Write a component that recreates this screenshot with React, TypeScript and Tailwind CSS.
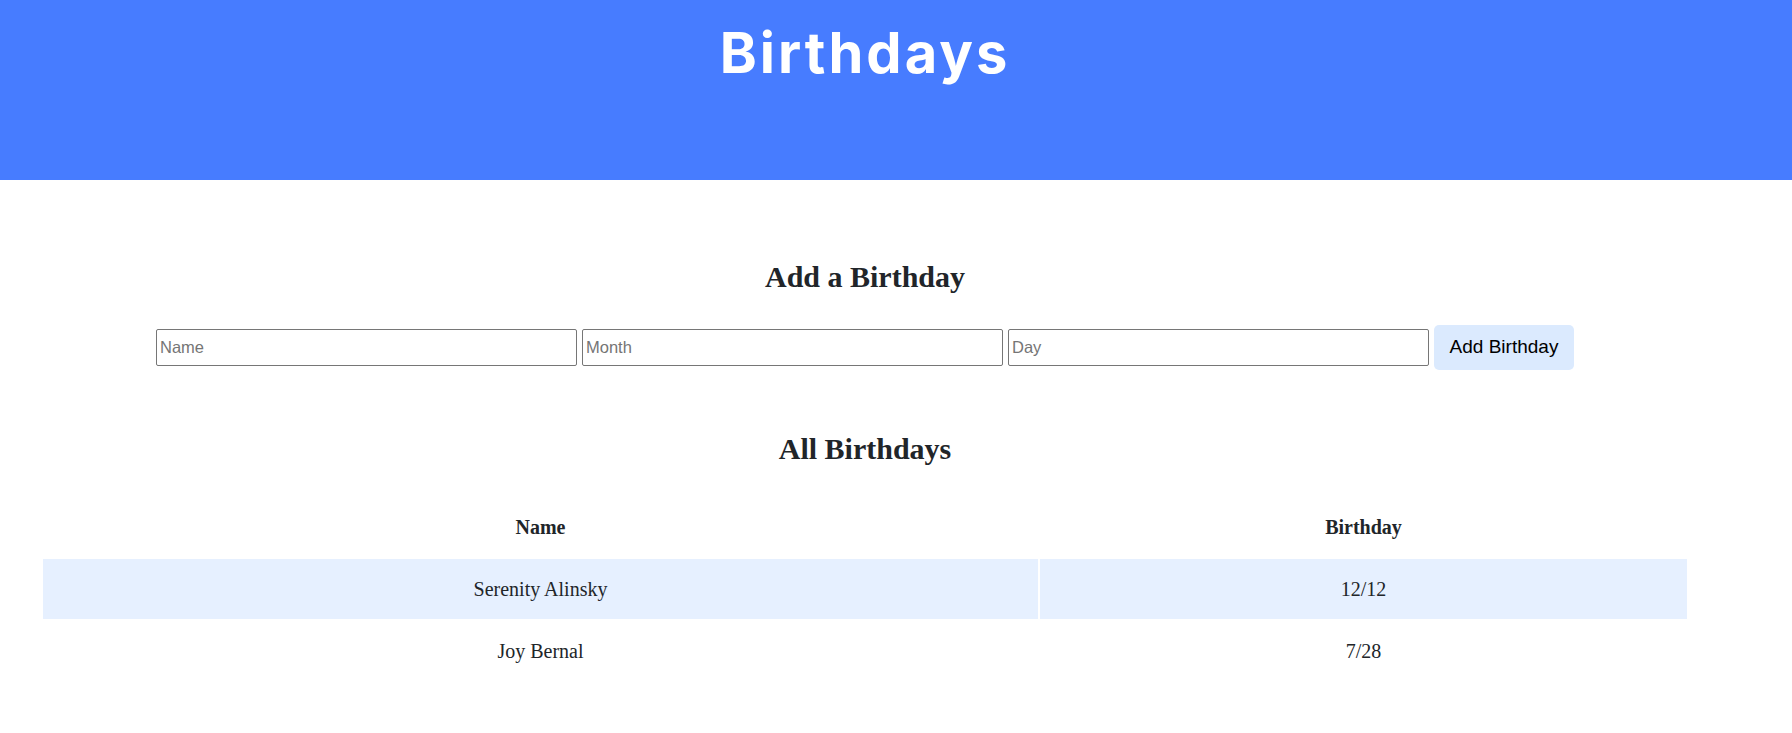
import React from "react";

const rows = [
  { name: "Serenity Alinsky", date: "12/12", shaded: true },
  { name: "Joy Bernal", date: "7/28", shaded: false },
];

export default function App() {
  return (
    <div className="min-h-[733px] w-full bg-white">
      <header className="h-[180px] w-full bg-[#477cff]">
        <div className="w-[1730px] pt-[25px] text-center">
          <h1 className="text-[56px] leading-[56px] font-bold tracking-[3px] text-white [font-family:Inter,'Open_Sans',sans-serif]">
            Birthdays
          </h1>
        </div>
      </header>
      <main className="flex w-[1730px] flex-col items-center text-[#212529] [font-family:'Liberation_Serif','Times_New_Roman',serif]">
        <h2 className="mt-[82px] text-[30px] leading-[30px] font-bold">Add a Birthday</h2>
        <form className="mt-[33px] flex items-center gap-[5px] [font-family:'Liberation_Sans',Arial,sans-serif]">
          <input
            placeholder="Name"
            className="h-[37px] w-[421px] rounded-[2px] border border-[#767676] px-[3px] text-[16.5px] text-black placeholder:text-[#757575]"
          />
          <input
            placeholder="Month"
            className="h-[37px] w-[421px] rounded-[2px] border border-[#767676] px-[3px] text-[16.5px] text-black placeholder:text-[#757575]"
          />
          <input
            placeholder="Day"
            className="h-[37px] w-[421px] rounded-[2px] border border-[#767676] px-[3px] text-[16.5px] text-black placeholder:text-[#757575]"
          />
          <button
            type="button"
            className="h-[45px] w-[140px] rounded-[5px] bg-[#dbeafe] text-[19px] text-black"
          >
            Add Birthday
          </button>
        </form>
        <h2 className="mt-[64px] text-[30px] leading-[30px] font-bold">All Birthdays</h2>
        <table className="mt-[31px] w-[1648px] border-separate border-spacing-[2px]">
          <thead>
            <tr>
              <th className="h-[60px] w-[995px] text-center align-middle text-[20px] font-bold">Name</th>
              <th className="h-[60px] text-center align-middle text-[20px] font-bold">Birthday</th>
            </tr>
          </thead>
          <tbody>
            {rows.map((r) => (
              <tr key={r.name} className={r.shaded ? "bg-[#e6f0ff]" : ""}>
                <td className="h-[60px] text-center align-middle text-[20px]">{r.name}</td>
                <td className="h-[60px] text-center align-middle text-[20px]">{r.date}</td>
              </tr>
            ))}
          </tbody>
        </table>
      </main>
    </div>
  );
}
